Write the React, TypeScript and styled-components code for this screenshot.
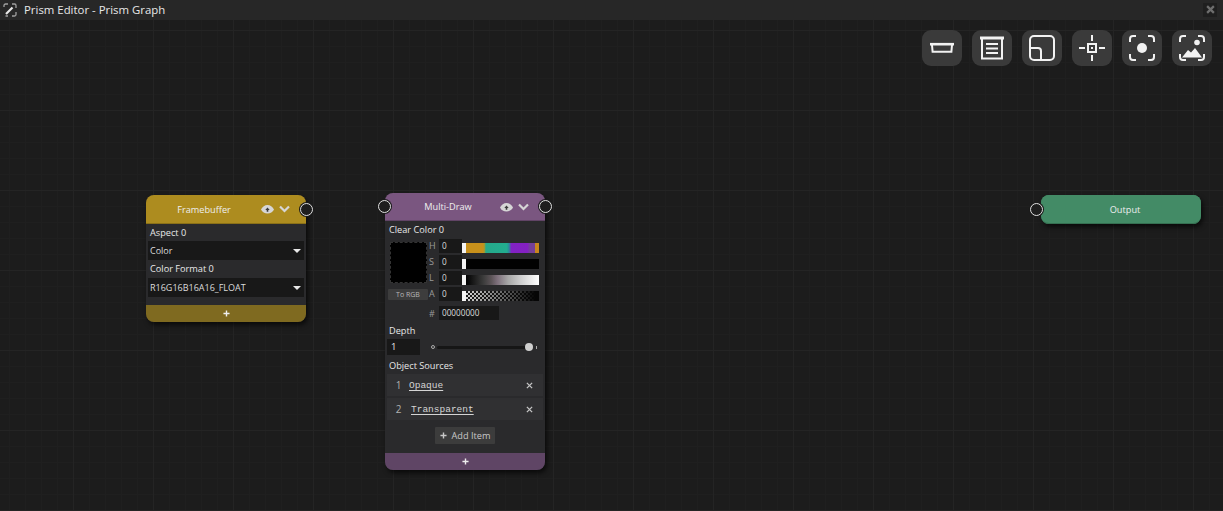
import React from "react";
import styled, { createGlobalStyle } from "styled-components";

const Global = createGlobalStyle`
  html, body { margin: 0; padding: 0; background: #1c1c1c; overflow: hidden; }
  * { box-sizing: border-box; }
`;

const Page = styled.div`
  width: 1223px; height: 511px; display: flex; flex-direction: column;
  font-family: "Open Sans", "Liberation Sans", sans-serif; color: #e6e6e6;
`;
const TitleBar = styled.div`
  height: 20px; flex: none; background: #272727; display: flex; align-items: center;
  padding: 0 0 1px 3px; font-size: 11.4px; color: #e8e8e8;
`;
const TitleText = styled.span`margin-left: 7px;`;
const CloseBtn = styled.div`
  margin-left: auto; margin-right: 6px; width: 14px; height: 14px; background: #1f1f1f;
  display: flex; align-items: center; justify-content: center; color: #6e6e6e;
`;
const Canvas = styled.div`
  position: relative; flex: 1;
  background-color: #1c1c1c;
  background-image:
    linear-gradient(#242424 1px, transparent 1px),
    linear-gradient(90deg, #242424 1px, transparent 1px),
    linear-gradient(#1f1f1f 1px, transparent 1px),
    linear-gradient(90deg, #1f1f1f 1px, transparent 1px);
  background-size: 80px 80px, 80px 80px, 16px 16px, 16px 16px;
  background-position: -7px 10px, -7px 10px, -7px 10px, -7px 10px;
`;
const Toolbar = styled.div`
  position: absolute; top: 10px; right: 11px; display: flex; gap: 10px;
`;
const ToolBtn = styled.button`
  width: 40px; height: 36px; border: 0; border-radius: 9px; background: #3a3a3a; padding: 0;
  display: flex; align-items: center; justify-content: center; color: #f2f2f2;
`;
const Node = styled.div<{ $x: number; $y: number; $h: number; $bg?: string }>`
  position: absolute; left: ${p => p.$x}px; top: ${p => p.$y}px; width: 160px; height: ${p => p.$h}px;
  border-radius: 8px; background: ${p => p.$bg ?? "#2a2a2c"}; box-shadow: 2px 3px 5px rgba(0,0,0,.65);
  display: flex; flex-direction: column;
`;
const Header = styled.div<{ $bg: string; $h: number; $pad: string; $flat?: boolean }>`
  height: ${p => p.$h}px; background: ${p => p.$bg}; border-radius: ${p => (p.$flat ? "8px" : "8px 8px 0 0")}; flex: none;
  position: relative; display: flex; align-items: center; justify-content: center; padding: ${p => p.$pad};
  font-size: 9.2px; color: #eee; border-bottom: 1px solid rgba(0,0,0,.2);
`;
const HeaderIcons = styled.div`
  position: absolute; right: 16px; top: 0; bottom: 0; display: flex; align-items: center; gap: 5px; color: #d6d6d6;
`;
const Port = styled.div<{ $x: number; $y: number }>`
  position: absolute; left: ${p => p.$x}px; top: ${p => p.$y}px; width: 15px; height: 15px; border-radius: 50%;
  background: #1a1a1a; display: flex; align-items: center; justify-content: center; z-index: 2;
  &::after { content: ""; width: 11px; height: 11px; border-radius: 50%; border: 1.5px solid #e0e0e0; background: #1e1e1e; }
`;
const Label = styled.div<{ $h: number; $lh?: number }>`
  height: ${p => p.$h}px; padding-left: 4px; font-size: 9.2px; line-height: ${p => p.$lh ?? p.$h}px; color: #e8e8e8;
`;
const Select = styled.div`
  height: 19px; margin: 0 2px; background: #181818; display: flex; align-items: center;
  justify-content: space-between; padding: 0 3px 0 2px; font-size: 9px; color: #dcdcdc;
`;
const Caret = styled.span`
  width: 0; height: 0; border-left: 4px solid transparent; border-right: 4px solid transparent; border-top: 4px solid #e8e8e8;
`;
const Footer = styled.div<{ $bg: string }>`
  height: 17px; background: ${p => p.$bg}; border-radius: 0 0 8px 8px; display: flex; align-items: center; justify-content: center;
  color: #eee; margin-top: auto;
`;
const PickerRow = styled.div`
  display: flex; padding-left: 3px; height: 67px;
`;
const PickerLeft = styled.div`width: 40px; display: flex; flex-direction: column; align-items: center;`;
const Swatch = styled.div`
  width: 37px; height: 41px; margin-top: 3px; background: #000; border: 1px dashed #333;
`;
const ToRgb = styled.div`
  width: 40px; height: 11px; margin-top: 6px; background: #3d3d3d; border-radius: 1px; font-size: 7px; line-height: 11px; text-align: center; color: #b8b8b8;
`;
const Channels = styled.div`display: flex; flex-direction: column; gap: 2px; margin-left: 1px;`;
const ChannelRow = styled.div`display: flex; align-items: flex-end; height: 14px;`;
const ChannelName = styled.span`width: 10px; font-size: 9px; line-height: 14px; color: #9a9a9a;`;
const ChannelValue = styled.div`
  width: 23px; height: 14px; background: #181818; font-size: 8.2px; line-height: 13px; padding-left: 3px; color: #ddd;
`;
const Track = styled.div<{ $bg: string }>`
  position: relative; width: 77px; height: 10px; background: ${p => p.$bg};
  &::before { content: ""; position: absolute; left: 0; top: 0; width: 4px; height: 10px; background: #f4f4f4; }
`;
const HexRow = styled.div`display: flex; align-items: center; height: 14px; margin-left: 44px;`;
const HexMark = styled.span`width: 10px; font-size: 9px; color: #9a9a9a;`;
const HexValue = styled.div`
  width: 60px; height: 14px; background: #181818; font-size: 8.2px; line-height: 14px; padding-left: 3px; color: #ddd;
`;
const SliderRow = styled.div`display: flex; align-items: center; height: 16px; padding-left: 2px;`;
const NumberBox = styled.div`
  width: 33px; height: 16px; background: #181818; font-size: 9.5px; line-height: 16px; padding-left: 4px; color: #e8e8e8;
`;
const MinDot = styled.span`
  width: 4px; height: 4px; margin-left: 11px; border-radius: 50%; border: 1px solid #aaa;
`;
const SliderTrack = styled.div`
  position: relative; width: 91px; height: 3px; margin-left: 2px; background: #161616; border-radius: 2px;
  &::after { content: ""; position: absolute; right: -5px; top: -2.5px; width: 8px; height: 8px; border-radius: 50%; background: #cfcfcf; }
`;
const MaxTick = styled.span`width: 1px; height: 3px; margin-left: 8px; background: #aaa;`;
const ListRow = styled.div`
  height: 22px; margin: 0 2px 2px 2px; background: #303032; display: flex; align-items: center; position: relative;
`;
const ListIndex = styled.span`width: 21px; text-align: center; margin-left: 1px; font-size: 10px; color: #b0b0b0;`;
const ListLink = styled.span<{ $ml: number }>`
  margin-left: ${p => p.$ml}px; font-family: "Liberation Mono", monospace; font-size: 9.5px; color: #d4d4d4;
  text-decoration: underline; text-underline-offset: 2px;
`;
const ListClose = styled.span`
  position: absolute; right: 10px; top: 0; bottom: 0; display: flex; align-items: center; color: #c4c4c4;
`;
const AddRow = styled.div`display: flex; justify-content: center; padding-top: 5px;`;
const AddBtn = styled.div`
  width: 60px; height: 17px; background: #3c3c3c; border-radius: 1px; display: flex; align-items: center; justify-content: center;
  gap: 5px; font-size: 9.2px; color: #c8c8c8;
`;

const Plus = ({ size = 7 }: { size?: number }) => (
  <svg width={size} height={size} viewBox="0 0 8 8"><path d="M4 .5v7M.5 4h7" stroke="currentColor" strokeWidth="1.6" /></svg>
);
const Eye = () => (
  <svg width="13" height="10" viewBox="0 0 13 10" fill="currentColor">
    <path d="M0 5.500C1.300 2.800 3.800 1 6.500 1S11.700 2.800 13 5.500C11.700 8 9.300 9.500 6.500 9.500S1.300 8 0 5.500z" />
    <path d="M6.500 3.500 4.300 6h1.400v1.800h1.600V6h1.400z" fill="#3a3a3a" />
  </svg>
);
const Chevron = () => (
  <svg width="11" height="8" viewBox="0 0 11 8" fill="none"><path d="M1 1.500 5.500 6 10 1.500" stroke="currentColor" strokeWidth="2.200" /></svg>
);
const Cross = ({ size = 7, w = 1.5 }: { size?: number; w?: number }) => (
  <svg width={size} height={size} viewBox="0 0 8 8"><path d="M1 1l6 6M7 1 1 7" stroke="currentColor" strokeWidth={w} /></svg>
);

const S = { fill: "none", stroke: "currentColor", strokeWidth: 2 };
const IconTray = () => (
  <svg width="26" height="26" viewBox="0 0 26 26" {...S}>
    <path d="M1 9.200h24" strokeWidth="2.600" /><path d="M3 10l.6 6.800h18.800L23 10" />
  </svg>
);
const IconList = () => (
  <svg width="26" height="26" viewBox="0 0 26 26" {...S}>
    <path d="M1 3h24" strokeWidth="3" /><path d="M3 3v20.500h20V3" />
    <path d="M7 9h12M7 13.500h12M7 18h12" />
  </svg>
);
const IconPanel = () => (
  <svg width="26" height="26" viewBox="0 0 26 26" {...S}>
    <rect x="1" y="1" width="24" height="24" rx="4" /><path d="M1 13h8a3 3 0 0 1 3 3v9" />
  </svg>
);
const IconFocus = () => (
  <svg width="26" height="26" viewBox="0 0 26 26" {...S}>
    <path d="M13 0v6M13 20v6M0 13h6M20 13h6" /><rect x="9" y="9" width="8" height="8" />
    <rect x="12" y="12" width="2" height="2" fill="currentColor" stroke="none" />
  </svg>
);
const Corners = () => <path d="M1 7V4a3 3 0 0 1 3-3h3M19 1h3a3 3 0 0 1 3 3v3M1 19v3a3 3 0 0 0 3 3h3M19 25h3a3 3 0 0 0 3-3v-3" {...S} />;
const IconCapture = () => (
  <svg width="26" height="26" viewBox="0 0 26 26"><Corners /><circle cx="13" cy="13" r="5" fill="currentColor" /></svg>
);
const IconImage = () => (
  <svg width="26" height="26" viewBox="0 0 26 26">
    <Corners /><circle cx="18" cy="7.500" r="2.800" fill="currentColor" />
    <path d="M3 22.500l6-7.500 3 2.500 4-4.500 7 9.500z" fill="currentColor" />
  </svg>
);
const AppIcon = () => (
  <svg width="14" height="14" viewBox="0 0 14 14" fill="none">
    <path d="M1 4V2.500A1.500 1.500 0 0 1 2.500 1H5M9 1h2.500A1.500 1.500 0 0 1 13 2.500V5M13 9v2.500a1.500 1.500 0 0 1-1.500 1.500H9M5 13H2.500" stroke="#a0a0a0" strokeWidth="1.300" />
    <path d="M3 11 9.500 4.500" stroke="#e8e8e8" strokeWidth="2.200" />
  </svg>
);

const hue = "linear-gradient(90deg,#c7901b 0 27%,#a89a2c 29%,#26a98a 31%,#22ad90 58%,#2a8d9a 61%,#8222c4 64%,#8420c2 85%,#75409a 88% 95%,#c8861e 95%)";
const lightness = "linear-gradient(90deg,#000 5%,#3c3c3c 28%,#5c5458 38%,#7e707c 46%,#a8a8a8 60%,#cfcfcf 76%,#fff 100%)";
const checker = "linear-gradient(90deg,rgba(0,0,0,0) 5%,#060606 95%),repeating-conic-gradient(#d8d8d8 0 25%, #1a1a1a 0 50%) 0 0/4px 4px";

export default function App() {
  return (
    <Page>
      <Global />
      <TitleBar>
        <AppIcon />
        <TitleText>Prism Editor - Prism Graph</TitleText>
        <CloseBtn><Cross size={9} w={2} /></CloseBtn>
      </TitleBar>
      <Canvas>
        <Toolbar>
          <ToolBtn><IconTray /></ToolBtn>
          <ToolBtn><IconList /></ToolBtn>
          <ToolBtn><IconPanel /></ToolBtn>
          <ToolBtn><IconFocus /></ToolBtn>
          <ToolBtn><IconCapture /></ToolBtn>
          <ToolBtn><IconImage /></ToolBtn>
        </Toolbar>

        <Node $x={146} $y={175} $h={127}>
          <Header $bg="#ad8c1f" $h={29} $pad="0 44px 0 0">
            Framebuffer
            <HeaderIcons><Eye /><Chevron /></HeaderIcons>
          </Header>
          <Label $h={17}>Aspect 0</Label>
          <Select>Color<Caret /></Select>
          <Label $h={18}>Color Format 0</Label>
          <Select>R16G16B16A16_FLOAT<Caret /></Select>
          <Footer $bg="#7f6a20"><Plus /></Footer>
          <Port $x={153} $y={7} />
        </Node>

        <Node $x={385} $y={173} $h={277}>
          <Header $bg="#7a5680" $h={28} $pad="0 34px 0 0">
            Multi-Draw
            <HeaderIcons><Eye /><Chevron /></HeaderIcons>
          </Header>
          <Label $h={18}>Clear Color 0</Label>
          <PickerRow>
            <PickerLeft><Swatch /><ToRgb>To RGB</ToRgb></PickerLeft>
            <Channels>
              <ChannelRow><ChannelName>H</ChannelName><ChannelValue>0</ChannelValue><Track $bg={hue} /></ChannelRow>
              <ChannelRow><ChannelName>S</ChannelName><ChannelValue>0</ChannelValue><Track $bg="#020202" /></ChannelRow>
              <ChannelRow><ChannelName>L</ChannelName><ChannelValue>0</ChannelValue><Track $bg={lightness} /></ChannelRow>
              <ChannelRow><ChannelName>A</ChannelName><ChannelValue>0</ChannelValue><Track $bg={checker} /></ChannelRow>
            </Channels>
          </PickerRow>
          <HexRow><HexMark>#</HexMark><HexValue>00000000</HexValue></HexRow>
          <Label $h={19} $lh={21}>Depth</Label>
          <SliderRow>
            <NumberBox>1</NumberBox>
            <MinDot /><SliderTrack /><MaxTick />
          </SliderRow>
          <Label $h={19} $lh={21}>Object Sources</Label>
          <ListRow>
            <ListIndex>1</ListIndex><ListLink $ml={0}>Opaque</ListLink>
            <ListClose><Cross /></ListClose>
          </ListRow>
          <ListRow>
            <ListIndex>2</ListIndex><ListLink $ml={2}>Transparent</ListLink>
            <ListClose><Cross /></ListClose>
          </ListRow>
          <AddRow><AddBtn><Plus />Add Item</AddBtn></AddRow>
          <Footer $bg="#5f4565"><Plus /></Footer>
          <Port $x={-8} $y={6} />
          <Port $x={153} $y={6} />
        </Node>

        <Node $x={1041} $y={175} $h={29} $bg="#438b66">
          <Header $bg="#438b66" $h={29} $pad="0 0 0 8px" $flat>Output</Header>
          <Port $x={-12} $y={7} />
        </Node>
      </Canvas>
    </Page>
  );
}
